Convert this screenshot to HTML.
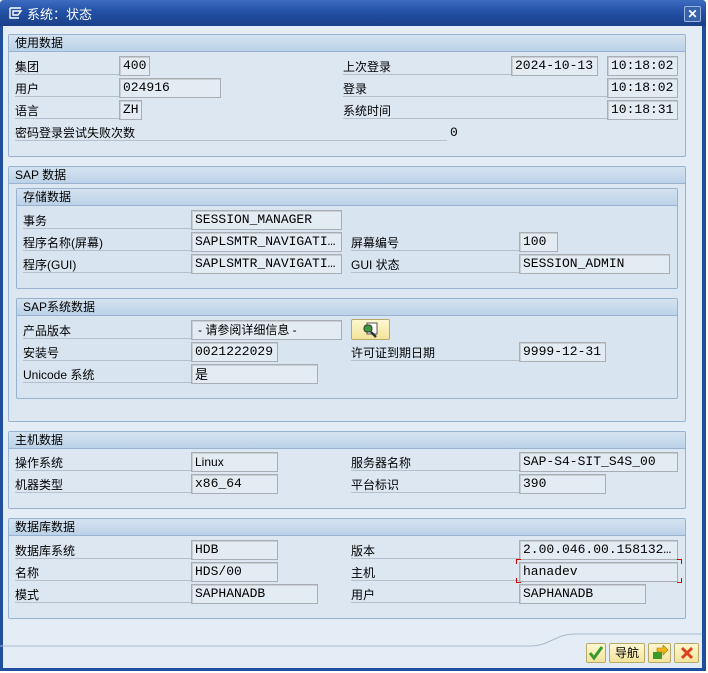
<!DOCTYPE html>
<html><head><meta charset="utf-8"><style>
*{margin:0;padding:0;box-sizing:border-box}
body{width:708px;height:673px;overflow:hidden;background:#fff;font-family:"Liberation Sans","Noto Sans CJK SC",sans-serif;font-size:12px;color:#000;position:relative}
.a{position:absolute}
.win{left:0;top:0;width:706px;height:671px;background:#1f4f9e;border-radius:4px 4px 0 0}
.title{left:0;top:0;width:706px;height:26px;background:linear-gradient(#3d6cc0,#2453a8 40%,#1a3f88);border-radius:4px 4px 0 0;color:#fff;font-size:13px}
.body{left:3px;top:26px;width:699px;height:642px;background:#e4edf6}
.grp{border:1px solid #98b3cf;background:#dce7f2;border-radius:2px}
.gh{position:absolute;left:0;top:0;right:0;height:17px;background:linear-gradient(#d5e3f0,#bcd2e8);border-bottom:1px solid #98b3cf;padding-left:6px;line-height:16px;font-size:12px}
.lb{position:absolute;font-size:12px;line-height:14px;border-bottom:1px solid #b5c0cc;height:17px;padding-top:2px}
.f{position:absolute;height:20px;background:#e3ebf3;border:1px solid #a8aeb4;box-shadow:inset 1px 1px 0 #c9ced3;font-family:"Liberation Mono","Noto Sans CJK SC",monospace;font-size:13px;line-height:18px;padding-left:3px;white-space:nowrap;overflow:hidden}
.btn{position:absolute;top:643px;height:20px;background:linear-gradient(#fff8d0,#f3e39a);border:1px solid #b8a96a;border-radius:2px;text-align:center;line-height:18px;font-size:13px}
</style></head><body>
<div class="a win"></div>
<div class="a title">
 <svg class="a" style="left:9px;top:7px" width="14" height="12"><path d="M1 1h11M1 1v10h9M4 4h8l-3 4H4z" stroke="#fff" stroke-width="1.4" fill="none"/></svg>
 <span class="a" style="left:27px;top:4px">系统：状态</span>
 <div class="a" style="left:684px;top:6px;width:17px;height:16px;border:1px solid #9db5dc;background:#3661ad;border-radius:2px;color:#fff;font-weight:bold;font-size:12px;line-height:14px;text-align:center">✕</div>
</div>
<div class="a body"></div>

<!-- 使用数据 -->
<div class="a grp" style="left:8px;top:34px;width:678px;height:123px"><div class="gh">使用数据</div></div>
<div class="lb" style="left:15px;top:58px;width:104px">集团</div>
<div class="lb" style="left:15px;top:80px;width:104px">用户</div>
<div class="lb" style="left:15px;top:102px;width:104px">语言</div>
<div class="lb" style="left:15px;top:124px;width:432px">密码登录尝试失败次数</div>
<div class="f" style="left:119px;top:56px;width:31px">400</div>
<div class="f" style="left:119px;top:78px;width:102px">024916</div>
<div class="f" style="left:119px;top:100px;width:23px">ZH</div>
<div class="a" style="left:450px;top:125px;font-family:'Liberation Mono',monospace;font-size:13px">0</div>
<div class="lb" style="left:343px;top:58px;width:168px">上次登录</div>
<div class="lb" style="left:343px;top:80px;width:264px">登录</div>
<div class="lb" style="left:343px;top:102px;width:264px">系统时间</div>
<div class="f" style="left:511px;top:56px;width:87px">2024-10-13</div>
<div class="f" style="left:607px;top:56px;width:71px">10:18:02</div>
<div class="f" style="left:607px;top:78px;width:71px">10:18:02</div>
<div class="f" style="left:607px;top:100px;width:71px">10:18:31</div>

<!-- SAP 数据 -->
<div class="a grp" style="left:8px;top:166px;width:678px;height:256px"><div class="gh">SAP 数据</div></div>
<div class="a grp" style="left:16px;top:188px;width:662px;height:101px;background:#d8e5f1"><div class="gh">存储数据</div></div>
<div class="lb" style="left:23px;top:212px;width:168px">事务</div>
<div class="lb" style="left:23px;top:234px;width:168px">程序名称(屏幕)</div>
<div class="lb" style="left:23px;top:256px;width:168px">程序(GUI)</div>
<div class="f" style="left:191px;top:210px;width:151px">SESSION_MANAGER</div>
<div class="f" style="left:191px;top:232px;width:151px">SAPLSMTR_NAVIGATI…</div>
<div class="f" style="left:191px;top:254px;width:151px">SAPLSMTR_NAVIGATI…</div>
<div class="lb" style="left:351px;top:234px;width:168px">屏幕编号</div>
<div class="lb" style="left:351px;top:256px;width:168px">GUI 状态</div>
<div class="f" style="left:519px;top:232px;width:39px">100</div>
<div class="f" style="left:519px;top:254px;width:151px">SESSION_ADMIN</div>

<div class="a grp" style="left:16px;top:298px;width:662px;height:101px;background:#d8e5f1"><div class="gh">SAP系统数据</div></div>
<div class="lb" style="left:23px;top:322px;width:168px">产品版本</div>
<div class="lb" style="left:23px;top:344px;width:168px">安装号</div>
<div class="lb" style="left:23px;top:366px;width:168px">Unicode 系统</div>
<div class="f" style="left:191px;top:320px;width:151px;font-family:'Liberation Sans','Noto Sans CJK SC',sans-serif;font-size:12px;padding-left:6px">- 请参阅详细信息 -</div>
<div class="f" style="left:191px;top:342px;width:87px">0021222029</div>
<div class="f" style="left:191px;top:364px;width:127px;font-family:'Noto Sans CJK SC',sans-serif">是</div>
<div class="btn" style="left:351px;top:319px;width:39px;height:21px">
 <svg width="20" height="18" style="margin-top:1px"><rect x="6" y="2" width="10" height="11" fill="#fff" stroke="#555"/><rect x="3" y="4" width="8" height="7" rx="3" fill="#3b9a3b" stroke="#333"/><path d="M10 11l5 5" stroke="#333" stroke-width="2.5"/></svg>
</div>
<div class="lb" style="left:351px;top:344px;width:168px">许可证到期日期</div>
<div class="f" style="left:519px;top:342px;width:87px">9999-12-31</div>

<!-- 主机数据 -->
<div class="a grp" style="left:8px;top:431px;width:678px;height:78px"><div class="gh">主机数据</div></div>
<div class="lb" style="left:15px;top:454px;width:176px">操作系统</div>
<div class="lb" style="left:15px;top:476px;width:176px">机器类型</div>
<div class="f" style="left:191px;top:452px;width:87px;font-family:'Liberation Sans',sans-serif;font-size:12px">Linux</div>
<div class="f" style="left:191px;top:474px;width:87px">x86_64</div>
<div class="lb" style="left:351px;top:454px;width:168px">服务器名称</div>
<div class="lb" style="left:351px;top:476px;width:168px">平台标识</div>
<div class="f" style="left:519px;top:452px;width:159px">SAP-S4-SIT_S4S_00</div>
<div class="f" style="left:519px;top:474px;width:87px">390</div>

<!-- 数据库数据 -->
<div class="a grp" style="left:8px;top:518px;width:678px;height:101px"><div class="gh">数据库数据</div></div>
<div class="lb" style="left:15px;top:542px;width:176px">数据库系统</div>
<div class="lb" style="left:15px;top:564px;width:176px">名称</div>
<div class="lb" style="left:15px;top:586px;width:176px">模式</div>
<div class="f" style="left:191px;top:540px;width:87px">HDB</div>
<div class="f" style="left:191px;top:562px;width:87px">HDS/00</div>
<div class="f" style="left:191px;top:584px;width:127px">SAPHANADB</div>
<div class="lb" style="left:351px;top:542px;width:168px">版本</div>
<div class="lb" style="left:351px;top:564px;width:168px">主机</div>
<div class="lb" style="left:351px;top:586px;width:168px">用户</div>
<div class="f" style="left:519px;top:540px;width:159px">2.00.046.00.158132…</div>
<div class="f" style="left:519px;top:562px;width:159px">hanadev</div>
<div class="a" style="left:516px;top:559px;width:5px;height:5px;border-left:1px solid #c00;border-top:1px solid #c00"></div>
<div class="a" style="left:677px;top:559px;width:5px;height:5px;border-right:1px solid #c00;border-top:1px solid #c00"></div>
<div class="a" style="left:516px;top:578px;width:5px;height:5px;border-left:1px solid #c00;border-bottom:1px solid #c00"></div>
<div class="a" style="left:677px;top:578px;width:5px;height:5px;border-right:1px solid #c00;border-bottom:1px solid #c00"></div>
<div class="f" style="left:519px;top:584px;width:127px">SAPHANADB</div>

<!-- bottom -->
<svg class="a" style="left:0;top:628px" width="708" height="22"><path d="M0 18H530C550 18 555 6 575 6H702" stroke="#a9b9cc" fill="none"/></svg>
<div class="btn" style="left:586px;width:20px"><svg width="16" height="16" style="margin-top:1px"><path d="M2 8l4 5 8-11" stroke="#3a9a2a" stroke-width="3" fill="none"/></svg></div>
<div class="btn" style="left:609px;width:36px;font-family:'Noto Sans CJK SC',sans-serif;font-size:12px">导航</div>
<div class="btn" style="left:648px;width:23px"><svg width="18" height="16" style="margin-top:1px"><rect x="2" y="7" width="9" height="7" fill="#3a9a2a"/><path d="M6 3h6V0l5 5-5 5V7H6z" fill="#f3b51a" stroke="#a57000" stroke-width=".6"/></svg></div>
<div class="btn" style="left:674px;width:25px"><svg width="14" height="14" style="margin-top:2px"><path d="M2 2l10 10M12 2L2 12" stroke="#d9421c" stroke-width="3"/></svg></div>
</body></html>
